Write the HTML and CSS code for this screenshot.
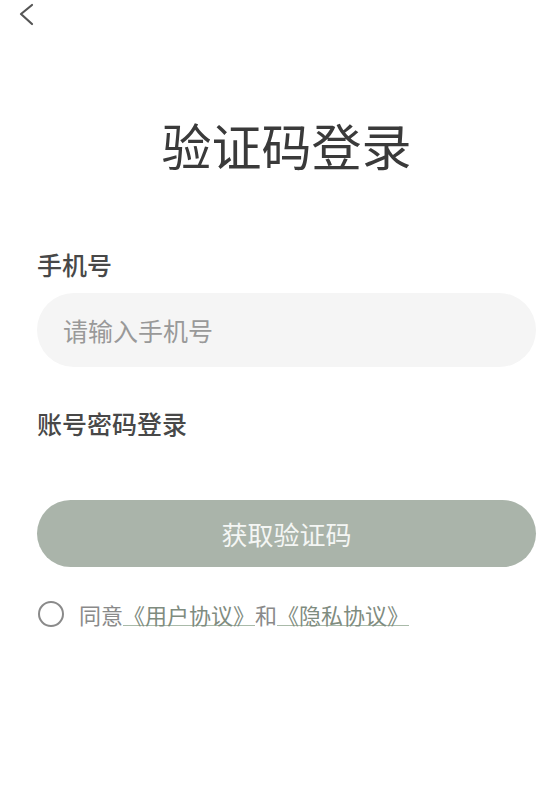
FILE: index.html
```html
<!DOCTYPE html>
<html lang="zh-CN">
<head>
<meta charset="utf-8">
<title>验证码登录</title>
<link rel="stylesheet" href="styles.css">
</head>
<body>
<div class="page">
  <div class="topbar">
    <svg class="back" width="20" height="28" viewBox="0 0 20 28" aria-label="返回">
      <polyline points="15,5 4,14 15,24" fill="none" stroke="#555" stroke-width="2.2" stroke-linecap="round" stroke-linejoin="round"/>
    </svg>
  </div>
  <div class="content">
    <h1 class="title">验证码登录</h1>
    <div class="label">手机号</div>
    <div class="input"><span class="placeholder">请输入手机号</span></div>
    <div class="switch">账号密码登录</div>
    <div class="btn">获取验证码</div>
    <div class="agree">
      <span class="radio"></span>
      <span class="agree-text">同意<span class="link">《用户协议》</span>和<span class="link">《隐私协议》</span></span>
    </div>
  </div>
</div>
</body>
</html>
```

FILE: styles.css
```css
html, body {
  margin: 0;
  padding: 0;
  background: #ffffff;
}
body {
  font-family: "Noto Sans CJK SC", "Noto Sans", sans-serif;
  overflow: hidden;
}
.page {
  width: 537px;
  height: 792px;
  overflow: hidden;
}
.topbar {
  height: 28px;
  padding-left: 17px;
}
.back {
  display: block;
}
.content {
  padding-left: 37px;
  width: 499px;
}
.title {
  margin: 92px 0 0 0;
  font-size: 50px;
  line-height: 48px;
  height: 48px;
  font-weight: 400;
  color: #3a3a3a;
  text-align: center;
  white-space: nowrap;
}
.label {
  margin-top: 84px;
  font-size: 25px;
  line-height: 24px;
  height: 24px;
  font-weight: 500;
  color: #484848;
  white-space: nowrap;
}
.input {
  margin-top: 17px;
  height: 74px;
  border-radius: 37px;
  background: #f5f5f5;
  display: flex;
  align-items: center;
  padding-left: 26px;
}
.placeholder {
  font-size: 25px;
  line-height: 25px;
  color: #999999;
  white-space: nowrap;
}
.switch {
  margin-top: 44px;
  font-size: 25px;
  line-height: 25px;
  height: 25px;
  font-weight: 500;
  color: #484848;
  white-space: nowrap;
}
.btn {
  margin-top: 64px;
  height: 67px;
  border-radius: 34px;
  background: #aab4aa;
  color: #f4f6f4;
  font-size: 26px;
  line-height: 67px;
  text-align: center;
  white-space: nowrap;
}
.agree {
  margin-top: 34px;
  height: 26px;
  display: flex;
  align-items: center;
}
.radio {
  width: 22px;
  height: 22px;
  border: 2px solid #8a8a8a;
  border-radius: 50%;
  margin-left: 1px;
  flex: none;
}
.agree-text {
  margin-left: 15px;
  font-size: 22px;
  line-height: 22px;
  color: #8a8a8a;
  white-space: nowrap;
}
.link {
  display: inline-block;
  color: #7f8c7f;
  border-bottom: 1.5px solid #a9baa9;
  line-height: 22px;
}
```
